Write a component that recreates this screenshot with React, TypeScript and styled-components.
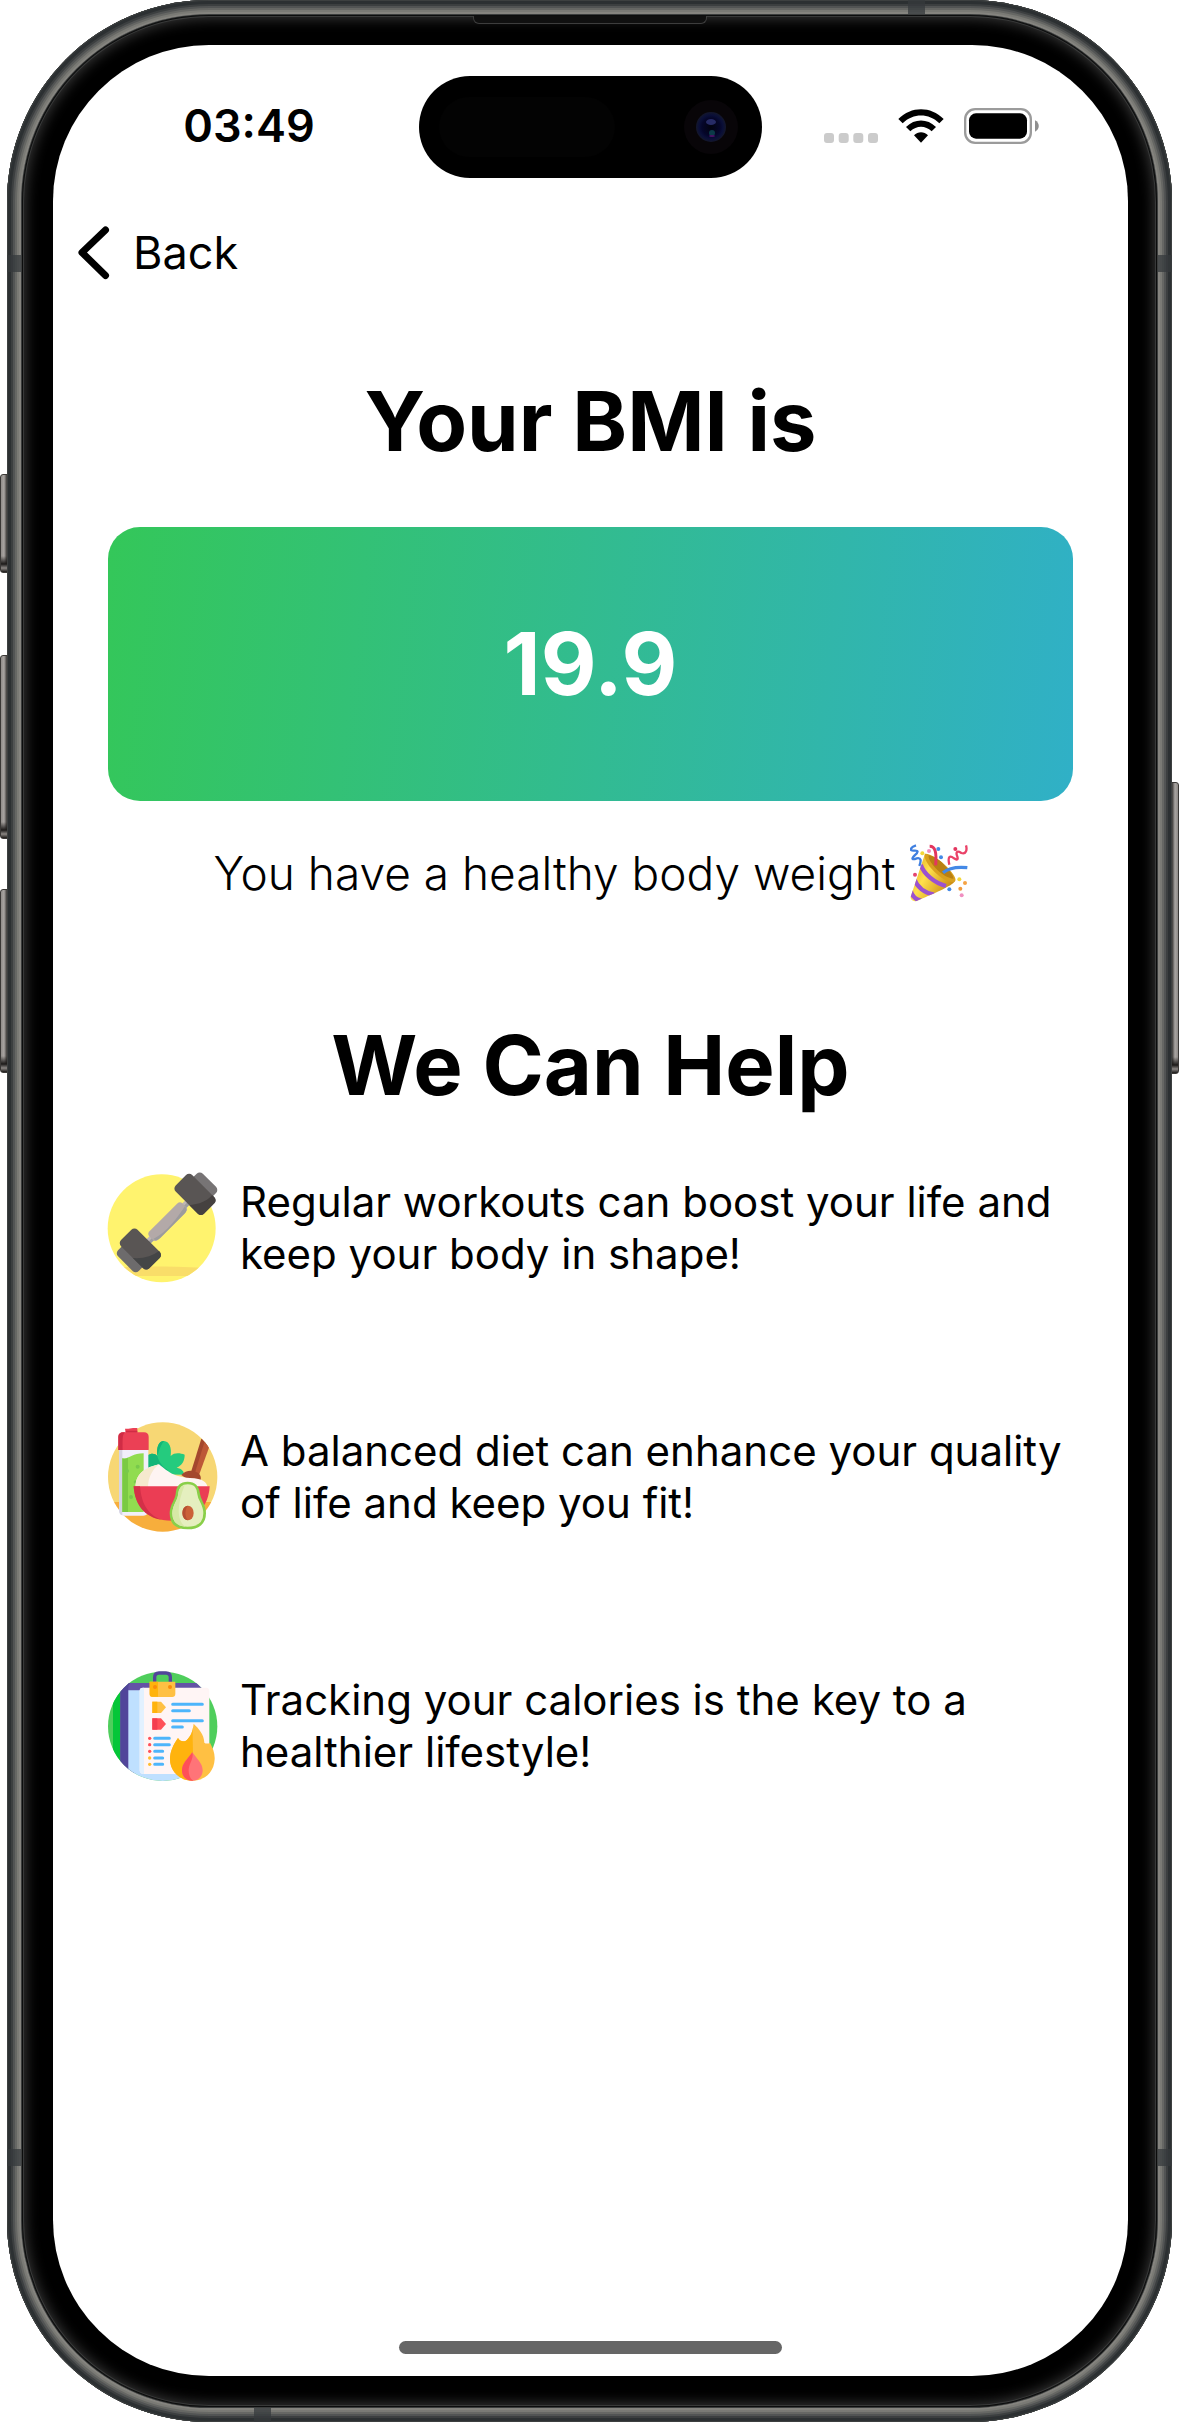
import React from "react";
import styled, { createGlobalStyle } from "styled-components";

const GlobalStyle = createGlobalStyle`
  *, *::before, *::after { box-sizing: border-box; }
  body {
    margin: 0;
    background: #ffffff;
    color: #000000;
    font-family: Inter, "Liberation Sans", sans-serif;
  }
`;

const Stage = styled.div`
  position: relative;
  display: flex;
  min-height: 100vh;
  padding: 0 7px;
`;

const SideKey = styled.span<{ $side: "left" | "right"; $top: number; $height: number }>`
  position: absolute;
  ${(p) => p.$side}: 0;
  top: ${(p) => p.$top}px;
  width: 12px;
  height: ${(p) => p.$height}px;
  border-radius: 3px;
  border: 1px solid #3a3836;
  background: ${(p) =>
    `linear-gradient(to bottom, transparent calc(100% - 16px), #1c1a19 calc(100% - 8px), #8a8683 calc(100% - 4px), #1c1a19 100%),
     linear-gradient(to ${p.$side === "left" ? "right" : "left"}, #8f8b88, #a9a5a2 3px, #3a3836 6px)`};
`;

const Frame = styled.div`
  position: relative;
  flex: 1;
  display: flex;
  padding: 15px;
  border-radius: 202px;
  background: #111313;
  box-shadow:
    inset 0 0 0 1px #3d4040,
    inset 0 0 0 4px #2c3032,
    inset 0 0 0 6px #3c3f40,
    inset 0 0 0 8px #525454,
    inset 0 0 0 10px #666764,
    inset 0 0 0 12px #7a7a75,
    inset 0 0 0 14px #85847f,
    inset 0 0 0 15px #3b3d3d;
`;

const AntennaBand = styled.span<{ $edge: "top" | "right" | "bottom" | "left"; $from: "top" | "right" | "bottom" | "left"; $offset: number }>`
  position: absolute;
  ${(p) => p.$edge}: 0;
  ${(p) => p.$from}: ${(p) => p.$offset}px;
  width: ${(p) => (p.$edge === "top" || p.$edge === "bottom" ? 17 : 14)}px;
  height: ${(p) => (p.$edge === "top" || p.$edge === "bottom" ? 14 : 17)}px;
  background: rgba(54, 57, 60, 0.75);
`;

const Bezel = styled.div`
  position: relative;
  flex: 1;
  display: flex;
  padding: 30px 29px 31px 31px;
  border-radius: 187px;
  background: #000000;
  box-shadow:
    inset 0 0 0 1px #0c0d0d,
    inset 0 0 0 2px #383939,
    inset 0 0 14px 3px #3c3c3c;
`;

const Speaker = styled.span`
  position: absolute;
  top: 1px;
  left: 50%;
  width: 234px;
  height: 8px;
  margin-left: -117px;
  border: 1px solid #3d3d3d;
  border-top: 0;
  border-radius: 0 0 6px 6px;
  background: #101010;
`;

const Screen = styled.div`
  flex: 1;
  display: flex;
  flex-direction: column;
  border-radius: 156px;
  background: #ffffff;
`;

const StatusBar = styled.header`
  display: grid;
  grid-template-columns: 1fr 343px 1fr;
  align-items: center;
  padding: 31px 0 0;
`;

const Clock = styled.time`
  padding: 0 0 2px 26px;
  text-align: center;
  font-size: 45px;
  line-height: 56px;
  font-weight: 600;
`;

const Island = styled.div`
  display: flex;
  align-items: center;
  justify-content: space-between;
  height: 102px;
  padding: 0 24px 0 20px;
  border-radius: 51px;
  background: #000000;
`;

const Sensor = styled.span`
  width: 176px;
  height: 60px;
  border-radius: 30px;
  background: #030303;
`;

const StatusIcons = styled.div`
  display: flex;
  align-items: center;
  justify-content: center;
  gap: 20px;
  padding: 0 28px 2px 0;
`;

const NavBar = styled.nav`
  display: flex;
  padding: 43px 25px 0;
`;

const BackButton = styled.button`
  display: flex;
  align-items: center;
  gap: 23px;
  height: 64px;
  padding: 0;
  border: 0;
  background: none;
  color: inherit;
  font: inherit;
  font-size: 45px;
  line-height: 56px;
  cursor: pointer;
`;

const Content = styled.main`
  display: flex;
  flex-direction: column;
  padding: 84px 55px 0;
`;

const Title = styled.h1`
  margin: 0;
  text-align: center;
  font-size: 83px;
  line-height: 104px;
  font-weight: 700;
`;

const Subtitle = styled(Title).attrs({ as: "h2" })`
  margin-top: 110px;
`;

const ScoreCard = styled.output`
  display: flex;
  align-items: center;
  justify-content: center;
  height: 274px;
  margin-top: 54px;
  border-radius: 32px;
  background: linear-gradient(97deg, #34c759, #30b0c7);
  color: #ffffff;
  font-size: 86px;
  line-height: 104px;
  font-weight: 700;
`;

const Verdict = styled.p`
  display: flex;
  align-items: center;
  justify-content: center;
  gap: 14px;
  margin: 42px 0 0;
  font-size: 46px;
  line-height: 60px;
  font-weight: 300;
`;

const TipList = styled.ul`
  display: flex;
  flex-direction: column;
  gap: 139px;
  margin: 56px 0 0;
  padding: 0;
  list-style: none;
`;

const Tip = styled.li`
  display: flex;
  align-items: center;
  gap: 22px;
  height: 110px;
`;

const TipText = styled.p`
  flex: 1;
  margin: 0;
  font-size: 42px;
  line-height: 52px;
`;

const TipArt = styled.svg`
  flex: none;
  width: 110px;
  height: 110px;
  overflow: visible;
`;

const HomeIndicator = styled.span`
  align-self: center;
  width: 383px;
  height: 13px;
  margin: auto 0 22px;
  border-radius: 7px;
  background: #666666;
`;

const Camera = () => (
  <svg width="54" height="54" viewBox="0 0 54 54" aria-hidden="true">
    <defs>
      <radialGradient id="lens">
        <stop offset="0" stopColor="#02030f" />
        <stop offset="0.6" stopColor="#05062a" />
        <stop offset="0.8" stopColor="#0a0f38" />
        <stop offset="1" stopColor="#14172b" />
      </radialGradient>
    </defs>
    <circle cx="27" cy="27" r="27" fill="#080508" />
    <circle cx="27" cy="27" r="15" fill="url(#lens)" />
    <ellipse cx="27" cy="22" rx="5" ry="3" fill="#272b66" />
    <ellipse cx="28" cy="33" rx="3" ry="3" fill="#0b3a48" />
    <ellipse cx="28" cy="36" rx="3" ry="1" fill="#4b1166" />
  </svg>
);

const SignalDots = () => (
  <svg width="54" height="34" viewBox="0 0 54 34" aria-hidden="true" fill="#cbcbcb">
    <rect x="0" y="24" width="10" height="10" rx="3" />
    <rect x="14.7" y="24" width="10" height="10" rx="3" />
    <rect x="29.3" y="24" width="10" height="10" rx="3" />
    <rect x="44" y="24" width="10" height="10" rx="3" />
  </svg>
);

const Wifi = () => (
  <svg width="46" height="34" viewBox="0 0 138 102" role="img" aria-label="Wi-Fi">
    <path d="M1 30C40-9 98-9 137 30L124 43C92 12 46 12 14 43Z" />
    <path d="M24 54C50 28 88 28 114 54L101 67C82 49 56 49 37 67Z" />
    <path d="M48 79C60 67 78 67 90 79L69 101Z" />
  </svg>
);

const Battery = () => (
  <svg width="75" height="36" viewBox="0 0 225 108" role="img" aria-label="Battery full">
    <rect x="3.5" y="3.5" width="197" height="101" rx="30" fill="none" stroke="#9b9b9b" strokeWidth="7" />
    <rect x="15" y="16" width="174" height="76" rx="21" />
    <path d="M213 37C228 44 228 64 213 71Z" fill="#8f8f8f" />
  </svg>
);

const Chevron = () => (
  <svg width="32" height="54" viewBox="0 0 32 54" aria-hidden="true">
    <path d="M27.500 4L4 26.500L27.500 49.500" fill="none" stroke="#000" strokeWidth="7" strokeLinecap="round" strokeLinejoin="round" />
  </svg>
);

const PartyPopper = () => (
  <svg width="58" height="58" viewBox="0 0 174 174" role="img" aria-label="Party popper">
    <defs>
      <linearGradient id="cone" x1="0" y1="0" x2="1" y2="0.600">
        <stop offset="0" stopColor="#d99a16" />
        <stop offset="0.45" stopColor="#ffe04c" />
        <stop offset="1" stopColor="#c98a10" />
      </linearGradient>
      <clipPath id="coneClip">
        <path d="M45 29L134 112C128 126 64 152 20 171C6 174-1 164 3 155Z" />
      </clipPath>
    </defs>
    <path d="M45 29L134 112C128 126 64 152 20 171C6 174-1 164 3 155Z" fill="url(#cone)" />
    <g clipPath="url(#coneClip)" fill="none" stroke="#9b52cf" strokeWidth="13">
      <path d="M32 62C42 90 72 116 108 126" />
      <path d="M12 104C22 130 44 146 72 152" />
      <path d="M2 140C6 158 16 166 34 170" />
    </g>
    <path d="M45 29C62 28 92 48 112 70C132 92 142 108 134 113C120 118 94 104 74 84C52 62 40 40 45 29Z" fill="#d9a01e" />
    <path d="M56 34C72 36 92 50 108 68C122 84 132 98 130 104C116 104 96 92 80 76C64 60 54 44 56 34Z" fill="#b98012" />
    <path d="M59 7C76 7 80 24 77 64" fill="none" stroke="#e3365f" strokeWidth="9" />
    <path d="M99 86C118 70 142 68 172 71" fill="none" stroke="#4489e6" strokeWidth="10" />
    <g fill="none" strokeWidth="7" strokeLinejoin="round">
      <path d="M18 4C0 10-2 20 10 20C26 18 26 24 14 34C2 46 8 48 20 43C34 40 34 50 28 66" stroke="#3f7fe0" />
      <path d="M118 62C112 36 120 34 132 43C146 52 144 42 140 32C138 20 146 22 154 27C168 32 172 18 168 4" stroke="#ea4268" />
    </g>
    <circle cx="37" cy="28" r="6" fill="#f3d73a" />
    <circle cx="57" cy="21" r="6" fill="#f08fc0" />
    <circle cx="85" cy="15" r="6" fill="#4489e6" />
    <circle cx="93" cy="40" r="6" fill="#4489e6" />
    <circle cx="136" cy="15" r="6" fill="#e3365f" />
    <circle cx="15" cy="92" r="6" fill="#e3466f" />
    <circle cx="148" cy="106" r="6" fill="#f3d73a" />
    <circle cx="165" cy="117" r="6" fill="#f5a345" />
    <circle cx="151" cy="134" r="6" fill="#f09a3c" />
    <circle cx="118" cy="136" r="6" fill="#4489e6" />
    <circle cx="155" cy="154" r="6" fill="#f08fc0" />
  </svg>
);

const Dumbbell = () => (
  <TipArt viewBox="54 69 330 330" aria-hidden="true">
    <defs>
      <clipPath id="sun"><circle cx="215" cy="235" r="162" /></clipPath>
      <clipPath id="plateTop"><rect x="-35" y="-60" width="70" height="120" rx="13" transform="translate(315 133) rotate(-45)" /></clipPath>
      <clipPath id="plateLow"><rect x="-35" y="-60" width="70" height="120" rx="13" transform="translate(151 297) rotate(-45)" /></clipPath>
    </defs>
    <circle cx="215" cy="235" r="162" fill="#fff36e" />
    <path d="M90 352C160 348 250 350 340 353V378H90Z" fill="#f9dd69" clipPath="url(#sun)" />
    <path d="M165 272L287 150L300 163L178 284Z" fill="#bfb6b4" />
    <path d="M172 278L293 156L300 163L178 284Z" fill="#9d9d9f" />
    <rect x="-70" y="-18" width="140" height="36" rx="11" transform="translate(233 215) rotate(-45)" fill="#b3a9a8" />
    <path d="M190 267C235 243 260 205 285 169C291 176 289 186 285 190L211 264C205 270 196 272 190 267Z" fill="#9c9b9d" />
    <rect x="-23" y="-41" width="46" height="82" rx="13" transform="translate(342 107) rotate(-45)" fill="#777475" />
    <rect x="-24" y="-44" width="48" height="88" rx="13" transform="translate(123 324) rotate(-45)" fill="#6d6b6c" />
    <rect x="-35" y="-60" width="70" height="120" rx="13" transform="translate(315 133) rotate(-45)" fill="#595554" />
    <path d="M298 166C345 160 366 144 376 118L410 160L350 220L290 180Z" fill="#454140" clipPath="url(#plateTop)" />
    <rect x="-35" y="-60" width="70" height="120" rx="13" transform="translate(151 297) rotate(-45)" fill="#595554" />
    <path d="M100 319C140 331 180 325 210 301L240 330L170 380Z" fill="#444546" clipPath="url(#plateLow)" />
  </TipArt>
);

const Diet = () => (
  <TipArt viewBox="54 66 330 330" aria-hidden="true">
    <defs><clipPath id="table"><circle cx="218" cy="231" r="164" /></clipPath></defs>
    <g clipPath="url(#table)">
      <rect x="50" y="60" width="340" height="246" fill="#f7d774" />
      <rect x="50" y="306" width="340" height="92" fill="#f7ae3c" />
      <path d="M334 116L360 120L322 226H300Z" fill="#a4472e" />
      <path d="M346 118L364 124L326 228H312Z" fill="#bd5837" />
    </g>
    <path d="M172 166C186 158 195 160 202 168C198 140 208 122 222 123C238 124 246 144 242 168C254 156 272 160 284 164C284 182 276 196 260 203C276 206 282 214 282 224L172 222Z" fill="#25cb7e" />
    <path d="M172 166C186 158 195 160 202 168C206 184 216 200 236 212L172 208ZM202 168C198 140 208 122 222 123C208 142 206 158 202 168Z" fill="#13b578" />
    <path d="M87 146H175V330C175 340 170 347 160 347H102C92 347 87 340 87 330Z" fill="#f1effa" />
    <path d="M87 146H97V346C90 345 87 338 87 330Z" fill="#d5d4e3" />
    <path d="M97 175C118 178 126 160 161 160V336H97Z" fill="#91dc50" />
    <path d="M97 175C104 178 110 176 114 174V336H97Z" fill="#7aca43" />
    <g fill="#78c94c"><circle cx="143" cy="200" r="6" /><circle cx="111" cy="213" r="6" /><circle cx="136" cy="246" r="5" /><circle cx="123" cy="291" r="6" /></g>
    <path d="M85 150V110C85 102 91 97 99 97H107L105 86C116 88 122 83 132 84H142V97H162C171 97 176 102 176 110V150Z" fill="#eb4055" />
    <path d="M85 150V110C85 102 91 97 99 97H106C98 103 98 108 98 150ZM107 92H142V97H107Z" fill="#d02c45" />
    <path d="M274 225C286 213 302 209 318 216C330 220 334 230 332 240L290 236Z" fill="#a4472e" />
    <path d="M137 262C136 222 164 203 207 193C236 216 248 230 300 234C340 236 350 246 353 262Z" fill="#fef4f2" />
    <path d="M137 262C136 222 164 203 207 193C186 210 175 232 174 262Z" fill="#f6e9ce" />
    <path d="M131 259H359C356 318 320 362 245 362C170 362 135 318 131 259Z" fill="#eb3d54" />
    <path d="M131 259H150C154 306 170 344 216 360C164 352 134 314 131 259Z" fill="#d33048" />
    <path d="M293 249C318 249 324 264 326 282C328 302 344 312 344 340C344 370 324 384 293 384C262 384 243 370 243 340C243 312 260 302 261 282C262 264 269 249 293 249Z" fill="#e5efbf" stroke="#89cf49" strokeWidth="8" />
    <path d="M264 285C262 302 248 314 247 340C247 364 262 378 286 380C258 360 262 310 284 256C270 260 266 270 264 285Z" fill="#d7e8a6" />
    <ellipse cx="294" cy="339" rx="17" ry="22" fill="#cb6138" />
    <path d="M294 317C272 318 272 358 294 361C284 350 284 328 294 317Z" fill="#b64f32" />
  </TipArt>
);

const CalorieLog = () => (
  <TipArt viewBox="54 63 330 330" aria-hidden="true">
    <defs><clipPath id="board"><circle cx="218" cy="229" r="164" /></clipPath></defs>
    <g clipPath="url(#board)">
      <rect x="50" y="60" width="340" height="340" fill="#4fce5c" />
      <path d="M69 140L91 112V340L69 310Z" fill="#05c638" />
      <path d="M91 110C91 103 96 99 103 99H328C335 99 338 104 338 110V370H91Z" fill="#6453a6" />
      <path d="M91 110C91 103 96 99 103 99H120C114 105 115 114 115 122V370H91Z" fill="#51459a" />
      <path d="M115 121H338V400H115Z" fill="#bfe0ff" />
    </g>
    <path d="M149 122C149 116 152 113 158 113H349C355 113 358 117 358 123V360C358 368 354 372 347 372H160C153 372 149 368 149 361Z" fill="#fff5f5" />
    <path d="M149 122C149 116 152 113 162 113V372C153 372 149 368 149 361Z" fill="#e2f1ff" />
    <path d="M194 98V82C194 74 199 69 207 69H228C236 69 241 74 241 82V98" fill="none" stroke="#51459a" strokeWidth="10" />
    <path d="M179 95H256V132C256 138 252 141 247 141H188C182 141 179 138 179 132Z" fill="#ffc043" />
    <path d="M179 95H204V140H188C182 141 179 138 179 132Z" fill="#ffb30d" />
    <circle cx="195" cy="111" r="6" fill="#fb8c0b" /><circle cx="240" cy="111" r="6" fill="#fb8c0b" />
    <path d="M187 155H213L228 172L213 189H187Z" fill="#ffc043" /><path d="M187 155H202V189H187Z" fill="#ffb30d" />
    <path d="M187 205H213L228 222L213 239H187Z" fill="#ff5058" /><path d="M187 205H202V239H187Z" fill="#f43e4f" />
    <g stroke="#4db5fb" strokeWidth="9" strokeLinecap="round">
      <path d="M248 163H337M248 182H298M248 212H337M248 231H277M194 265H238M194 284H238M194 304H218M194 324H218M194 343H218" />
    </g>
    <g fill="#ff5058"><circle cx="179" cy="265" r="5" /><circle cx="179" cy="284" r="5" /><circle cx="179" cy="304" r="5" /></g>
    <g fill="#ffbd2e"><circle cx="179" cy="324" r="5" /><circle cx="179" cy="343" r="5" /></g>
    <path d="M311 221C326 236 342 252 343 278C348 282 356 281 360 278C368 294 375 308 374 328C372 366 346 392 307 392C266 392 240 362 240 328C240 304 250 284 264 264C270 274 278 276 288 272C304 258 308 242 311 221Z" fill="#ffc043" />
    <path d="M311 221C304 258 312 282 308 392C266 392 240 362 240 328C240 304 250 284 264 264C270 274 278 276 288 272C304 258 308 242 311 221Z" fill="#ffb30d" />
    <path d="M307 307C320 326 338 340 338 361C338 380 325 392 307 392C288 392 276 380 276 361C276 340 294 326 307 307Z" fill="#ff7478" />
    <path d="M307 307C312 328 296 340 296 361C296 378 302 388 310 392C288 392 276 380 276 361C276 340 294 326 307 307Z" fill="#ff5058" />
  </TipArt>
);

const tips = [
  { Art: Dumbbell, lines: ["Regular workouts can boost your life and", "keep your body in shape!"] },
  { Art: Diet, lines: ["A balanced diet can enhance your quality", "of life and keep you fit!"] },
  { Art: CalorieLog, lines: ["Tracking your calories is the key to a", "healthier lifestyle!"] },
];

export default function App() {
  return (
    <>
      <GlobalStyle />
      <Stage>
        <SideKey $side="left" $top={474} $height={99} />
        <SideKey $side="left" $top={655} $height={184} />
        <SideKey $side="left" $top={889} $height={184} />
        <SideKey $side="right" $top={782} $height={292} />
        <Frame>
          <AntennaBand $edge="top" $from="right" $offset={247} />
          <AntennaBand $edge="left" $from="top" $offset={255} />
          <AntennaBand $edge="right" $from="top" $offset={255} />
          <AntennaBand $edge="left" $from="bottom" $offset={256} />
          <AntennaBand $edge="right" $from="bottom" $offset={256} />
          <AntennaBand $edge="bottom" $from="left" $offset={247} />
          <Bezel>
            <Speaker />
            <Screen>
              <StatusBar>
                <Clock>03:49</Clock>
                <Island>
                  <Sensor />
                  <Camera />
                </Island>
                <StatusIcons>
                  <SignalDots />
                  <Wifi />
                  <Battery />
                </StatusIcons>
              </StatusBar>
              <NavBar>
                <BackButton type="button">
                  <Chevron />
                  Back
                </BackButton>
              </NavBar>
              <Content>
                <Title>Your BMI is</Title>
                <ScoreCard>19.9</ScoreCard>
                <Verdict>
                  You have a healthy body weight
                  <PartyPopper />
                </Verdict>
                <Subtitle>We Can Help</Subtitle>
                <TipList>
                  {tips.map(({ Art, lines }) => (
                    <Tip key={lines[0]}>
                      <Art />
                      <TipText>
                        {lines[0]}
                        <br />
                        {lines[1]}
                      </TipText>
                    </Tip>
                  ))}
                </TipList>
              </Content>
              <HomeIndicator />
            </Screen>
          </Bezel>
        </Frame>
      </Stage>
    </>
  );
}
